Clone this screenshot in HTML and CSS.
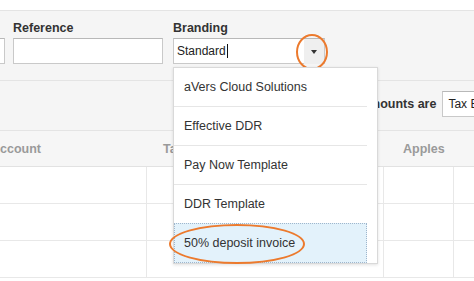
FILE: index.html
```html
<!DOCTYPE html>
<html lang="en">
<head>
  <meta charset="UTF-8">
  <title>Invoice Branding</title>
  <link rel="stylesheet" href="styles.css">
</head>
<body>

  <div class="topbar"></div>

  <div class="form-panel">
    <div class="field field-cut">
      <label>&nbsp;</label>
      <div class="input"></div>
    </div>
    <div class="field field-ref">
      <label for="reference">Reference</label>
      <div class="input" id="reference"></div>
    </div>
    <div class="field field-brand">
      <label>Branding</label>
      <div class="input combo">
        <span class="combo-text">Standard</span><span class="caret"></span>
        <span class="combo-btn"><span class="arrow"></span></span>
        <span class="ring ring-btn"></span>
      </div>
      <ul class="dropdown">
        <li>aVers Cloud Solutions</li>
        <li>Effective DDR</li>
        <li>Pay Now Template</li>
        <li>DDR Template</li>
        <li class="active">50% deposit invoice</li>
        <span class="ring ring-item"></span>
      </ul>
    </div>
  </div>

  <div class="amounts-row">
    <span class="amounts-label">Amounts are</span>
    <div class="input select">Tax Exclusive</div>
  </div>

  <table class="lines">
    <colgroup>
      <col style="width: 166px;">
      <col style="width: 237px;">
      <col style="width: 70px;">
      <col style="width: 60px;">
    </colgroup>
    <thead>
      <tr>
        <th class="c1">Account</th>
        <th class="c2">Tax Rate</th>
        <th class="c3">Apples</th>
        <th></th>
      </tr>
    </thead>
    <tbody>
      <tr><td></td><td></td><td></td><td></td></tr>
      <tr><td></td><td></td><td></td><td></td></tr>
      <tr><td></td><td></td><td></td><td></td></tr>
    </tbody>
  </table>

</body>
</html>
```

FILE: styles.css
```css
body {
  margin: 0;
  font-family: "Liberation Sans", Arial, sans-serif;
  font-size: 12px;
  color: #333;
  background: #fff;
  overflow: hidden;
}
.topbar {
  height: 10px;
  border-bottom: 1px solid #e4e4e4;
}
.form-panel {
  display: flex;
  gap: 10px;
  padding: 10px 0 16px;
  background: #f5f5f5;
  border-bottom: 1px solid #e4e4e4;
}
.field label {
  display: block;
  font-weight: bold;
  font-size: 12.5px;
  line-height: 14px;
  margin-bottom: 3px;
  color: #333;
}
.input {
  height: 24px;
  border: 1px solid #c9c9c9;
  border-top-color: #b8b8b8;
  background: #fff;
  box-sizing: content-box;
  line-height: 24px;
  padding: 0 3px;
  color: #222;
}
.field-cut { width: 100px; margin-left: -97px; }
.field-cut .input { width: 94px; }
.field-ref .input { width: 142px; }
.field-brand { position: relative; }
.combo {
  position: relative;
  width: 144px;
}
.caret {
  display: inline-block;
  width: 1px;
  height: 14px;
  background: #111;
  vertical-align: -3px;
  margin-left: 1px;
}
.combo-btn {
  position: absolute;
  top: 0;
  right: 0;
  width: 20px;
  height: 25px;
  background: #efefef;
  display: flex;
  align-items: center;
  justify-content: center;
}
.arrow {
  width: 0;
  height: 0;
  border-left: 3.5px solid transparent;
  border-right: 3.5px solid transparent;
  border-top: 4px solid #333;
}
.ring {
  position: absolute;
  border: 2px solid #ec7a2d;
  border-radius: 50%;
  box-sizing: border-box;
}
.ring-btn {
  left: 122px;
  top: -5px;
  width: 32px;
  height: 36px;
}
.dropdown {
  position: absolute;
  left: 0;
  top: 46px;
  width: 193px;
  margin: 0;
  padding: 0 10px 0 0;
  list-style: none;
  background: #fff;
  border: 1px solid #d9d9d9;
  box-shadow: 0 1px 3px rgba(0, 0, 0, 0.12);
  z-index: 2;
}
.dropdown li {
  height: 38px;
  line-height: 38px;
  padding-left: 10px;
  border-bottom: 1px solid #e6e6e6;
  color: #333;
  font-size: 12.5px;
}
.dropdown li.active {
  height: 38px;
  margin-top: -1px;
  border: 1px dotted #9fb6cc;
  background: #e3f2fb;
  padding-left: 9px;
}
.ring-item {
  left: -5px;
  top: 156px;
  width: 136px;
  height: 40px;
}
.amounts-row {
  display: flex;
  align-items: center;
  gap: 6px;
  padding: 10px 0 13px 360px;
  background: #f5f5f5;
  border-bottom: 1px solid #e4e4e4;
}
.amounts-label {
  font-weight: bold;
  font-size: 12.5px;
  white-space: nowrap;
}
.select {
  width: 100px;
  white-space: nowrap;
  padding-left: 5px;
}
.lines {
  table-layout: fixed;
  width: 533px;
  margin-left: -20px;
  border-collapse: separate;
  border-spacing: 0;
}
.lines th {
  height: 35px;
  padding: 0;
  text-align: left;
  font-weight: bold;
  font-size: 12.5px;
  color: #9a9a9a;
  background: #f6f6f6;
  border-bottom: 1px solid #e2e2e2;
  white-space: nowrap;
  overflow: hidden;
}
.lines th.c1 { padding-left: 11px; }
.lines th.c2 { padding-left: 17px; }
.lines th.c3 { padding-left: 20px; }
.lines td {
  height: 36px;
  padding: 0;
  border-bottom: 1px solid #e8e8e8;
  border-left: 1px solid #e8e8e8;
}
.lines td:first-child { border-left: none; }
```
